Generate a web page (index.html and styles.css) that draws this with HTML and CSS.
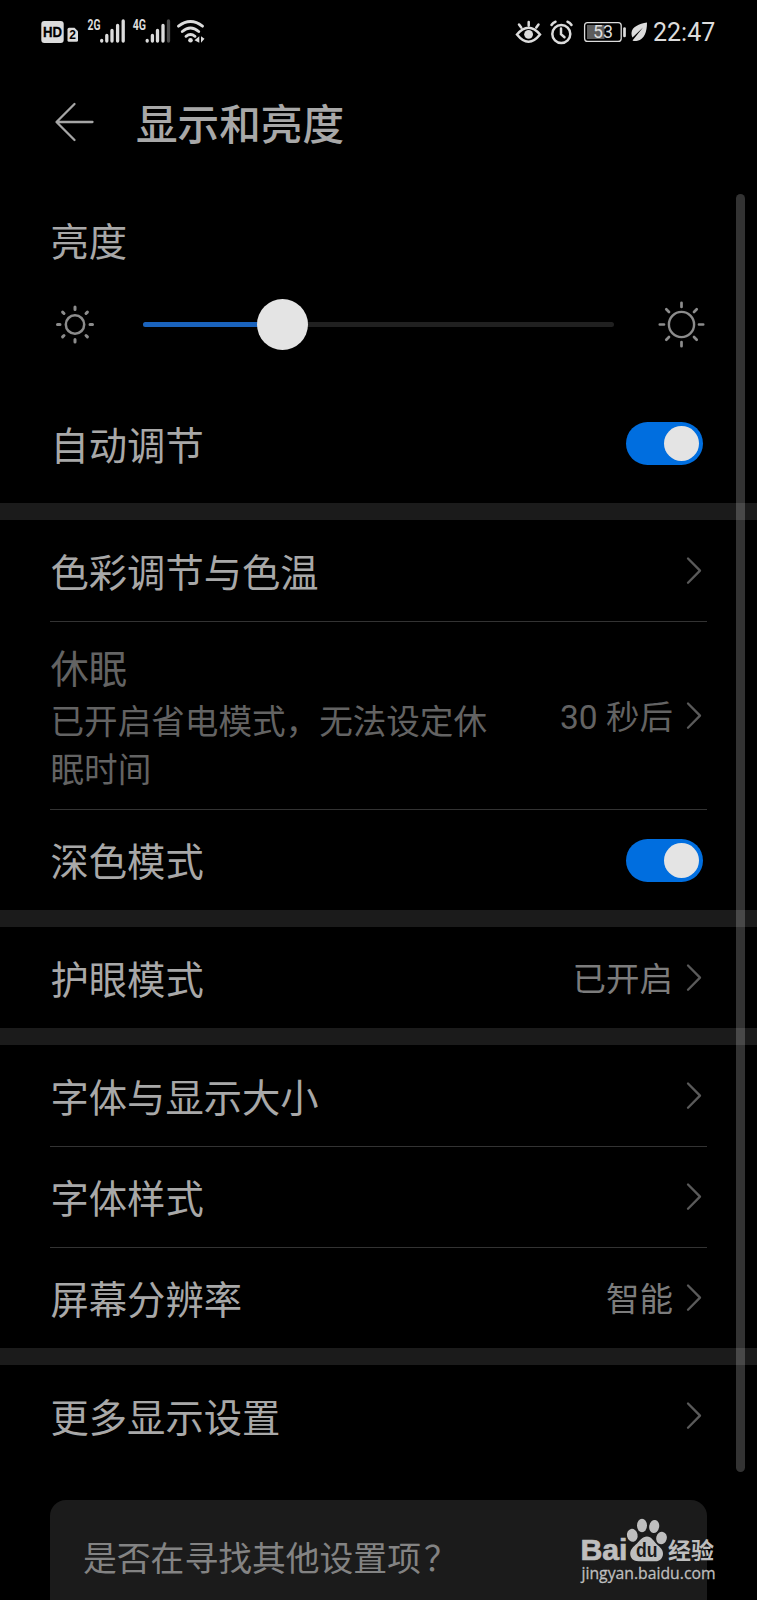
FILE: index.html
```html
<!DOCTYPE html>
<html lang="zh-CN">
<head>
<meta charset="utf-8">
<title>显示和亮度</title>
<link rel="stylesheet" href="styles.css">
</head>
<body>
<svg class="defs" width="0" height="0">
  <symbol id="chevron" viewBox="0 0 18 30"><path d="M2 2.500 14 14.600 2 26.700" fill="none" stroke="currentColor" stroke-width="2.300" stroke-linecap="round" stroke-linejoin="round"/></symbol>
</svg>
<div class="screen">
  <header class="status">
    <svg class="status-left" viewBox="36 10 180 40" fill="#dcdcdc">
      <rect x="41.300" y="21" width="22.400" height="22" rx="3"/>
      <text class="hd" x="43" y="37.300" textLength="19" lengthAdjust="spacingAndGlyphs">HD</text>
      <path d="M67.500 29.300q0-1.500 1.500-1.500h5.500l3.500 3.500v9q0 1.500-1.500 1.500H69q-1.500 0-1.500-1.500z"/>
      <text class="sim" x="69.300" y="39.300">2</text>
      <text class="net" x="87.500" y="30" textLength="13" lengthAdjust="spacingAndGlyphs">2G</text>
      <g stroke="#dcdcdc" stroke-width="3.300" stroke-linecap="round">
        <path d="M101.700 40.500v.6M106.800 35.500v5.600M112 30.500v10.600M117.600 25.500v15.600M123.200 21v20.100"/>
        <path d="M147.200 40.500v.6M152.400 35.500v5.600M157.500 30.500v10.600M163 25.500v15.600"/>
        <path d="M168.500 21v20.100" stroke="#4a4a4a"/>
      </g>
      <text class="net" x="132.700" y="30" textLength="13.300" lengthAdjust="spacingAndGlyphs">4G</text>
      <g fill="none" stroke="#dcdcdc" stroke-width="2.900" stroke-linecap="round">
        <path d="M178.500 26.200q12-9.500 24 0M182.300 31.500q8.200-6.800 16.400 0M186 36.300q4.500-3.500 9 0"/>
      </g>
      <circle cx="190.500" cy="40.300" r="2.300"/>
      <path d="M199.300 36.300v6.500l-4.800-2.500zM201 36.300v6.500l3.500-4z"/>
    </svg>
    <svg class="status-right" viewBox="510 10 140 40" fill="none" stroke="#dcdcdc" stroke-width="2.500" stroke-linecap="round">
      <path d="M517 34.500q11.500-13.500 23 0q-11.500 14.500-23 0zM528.700 22v3.500M519 24.500l2.200 3M538.500 24.500l-2.200 3"/>
      <circle cx="528.600" cy="34.300" r="4.400" fill="#dcdcdc" stroke="none"/>
      <circle cx="561.300" cy="34" r="9"/>
      <path d="M561 28.500v5.800l3.500 3M551.500 25q1.500-2.500 4-3.300M571.500 25q-1.500-2.500-4-3.300"/>
      <rect x="584.600" y="22.600" width="36.600" height="18.800" rx="3" stroke-width="1.300"/>
      <rect x="587" y="25" width="17.500" height="14" fill="#5c5c5c" stroke="none"/>
      <path d="M624.500 28.500v7.500" stroke-width="2.700"/>
      <text class="batt" x="593" y="38.300" stroke="none" textLength="20" lengthAdjust="spacingAndGlyphs">53</text>
      <path d="M647 22.500c-8 1.500-15 4-15.500 10.500c0 2 .3 3.200 1 4.500l10.500-10-10.500 13q2 1 5 .3c7-1.800 9.500-9 9.500-18.300z" fill="#dcdcdc" stroke="none"/>
    </svg>
    <span class="time">22:47</span>
  </header>

  <div class="titlebar">
    <svg class="back" viewBox="0 0 42 42" fill="none" stroke="#a6a6a6" stroke-width="2.300" stroke-linecap="round" stroke-linejoin="round"><path d="M38.500 21H3M20.500 3 2.500 21l18 18"/></svg>
    <h1>显示和亮度</h1>
  </div>

  <section class="brightness">
    <div class="label">亮度</div>
    <div class="slider-row">
      <svg class="sun" viewBox="-25 -24.500 50 50" fill="none" stroke="#8c8c8c" stroke-width="3" stroke-linecap="round">
        <circle r="9.200" stroke-width="2.500"/>
        <path d="M0-15v-2.500M0 15v2.500M-15 0h-2.500M15 0h2.500M-11-11l-1.400-1.400M11-11l1.400-1.400M-11 11l-1.400 1.400M11 11l1.400 1.400"/>
      </svg>
      <div class="track"><div class="fill"></div><div class="thumb"></div></div>
      <svg class="sun" viewBox="-24.500 -24.500 50 50" fill="none" stroke="#8c8c8c" stroke-width="2.700" stroke-linecap="round">
        <circle r="12.600" stroke-width="2.400"/>
        <path d="M0-17.500v-4.200M0 17.500v4.200M-17.500 0h-4.200M17.500 0h4.200M-12.500-12.500l-2.700-2.700M12.500-12.500l2.700-2.700M-12.500 12.500l-2.700 2.700M12.500 12.500l2.700 2.700"/>
      </svg>
    </div>
  </section>
  <div class="row auto"><span class="label">自动调节</span><span class="toggle"></span></div>
  <div class="band"></div>

  <div class="row"><span class="label">色彩调节与色温</span><svg class="chev"><use href="#chevron"/></svg></div>
  <div class="rule"></div>
  <div class="row sleep">
    <div class="stack"><div class="label">休眠</div><div class="note">已开启省电模式，无法设定休眠时间</div></div>
    <span class="value">30 秒后</span><svg class="chev"><use href="#chevron"/></svg>
  </div>
  <div class="rule"></div>
  <div class="row short"><span class="label">深色模式</span><span class="toggle"></span></div>
  <div class="band"></div>

  <div class="row"><span class="label">护眼模式</span><span class="value">已开启</span><svg class="chev"><use href="#chevron"/></svg></div>
  <div class="band"></div>

  <div class="row"><span class="label">字体与显示大小</span><svg class="chev"><use href="#chevron"/></svg></div>
  <div class="rule"></div>
  <div class="row short"><span class="label">字体样式</span><svg class="chev"><use href="#chevron"/></svg></div>
  <div class="rule"></div>
  <div class="row short"><span class="label">屏幕分辨率</span><span class="value">智能</span><svg class="chev"><use href="#chevron"/></svg></div>
  <div class="band"></div>

  <div class="row"><span class="label">更多显示设置</span><svg class="chev"><use href="#chevron"/></svg></div>
  <div class="card">是否在寻找其他设置项<span class="mark">？</span></div>

  <div class="scrollbar"></div>
  <svg class="watermark" viewBox="575 1510 150 80" fill="#bebebe">
    <text class="wm-bai" x="580.500" y="1560.300" textLength="47" lengthAdjust="spacingAndGlyphs">Bai</text>
    <ellipse cx="632.300" cy="1535.300" rx="5.300" ry="6.500" transform="rotate(-12 632.300 1535.300)"/>
    <ellipse cx="642" cy="1525.500" rx="5" ry="6.700"/>
    <ellipse cx="654.200" cy="1526.500" rx="5" ry="6.500" transform="rotate(10 654.200 1526.500)"/>
    <ellipse cx="661.500" cy="1538" rx="5.300" ry="6.300" transform="rotate(14 661.500 1538)"/>
    <path d="M647 1536.500c4.500 0 6.500 4.500 9.500 7.500c3.500 3.300 6.700 5.500 6.500 10c-.2 4-3 7.300-7.500 7.300h-17c-5 0-8.300-3-8.300-7.500c0-4.300 3.300-7 6.500-10c3.200-3.200 5.500-7.300 10.300-7.300z"/>
    <text class="wm-du" x="636" y="1557.300" textLength="21.500" lengthAdjust="spacingAndGlyphs">du</text>
    <text class="wm-cn" x="668" y="1558.800" textLength="46" lengthAdjust="spacingAndGlyphs">经验</text>
    <text class="wm-url" x="581.500" y="1579" textLength="134" lengthAdjust="spacingAndGlyphs">jingyan.baidu.com</text>
  </svg>
</div>
</body>
</html>
```
FILE: styles.css
```css
* { box-sizing: border-box; }
body {
  margin: 0;
  background: #000;
  color: #a8a8a8;
  font-family: Roboto, "Noto Sans CJK SC", sans-serif;
}
.defs { display: block; }
.screen {
  position: relative;
  width: 757px;
  height: 1600px;
  overflow: hidden;
  background: #000;
}
.status {
  display: flex;
  height: 60px;
  padding: 10px 0 0 36px;
}
.status-left { width: 180px; height: 40px; margin-right: 294px; }
.status-right { width: 140px; height: 40px; }
.time {
  margin-left: 3px;
  font-size: 25px;
  line-height: 46px;
  color: #dcdcdc;
}
.hd { font: 700 15px "Liberation Sans", sans-serif; fill: #000; stroke: #000; stroke-width: .3px; }
.sim { font: 700 12px "Liberation Sans", sans-serif; fill: #000; }
.net { font: 700 14.500px Roboto, sans-serif; }
.batt { font: 400 17.500px Roboto, sans-serif; fill: #dcdcdc; }

.titlebar {
  display: flex;
  align-items: center;
  height: 124px;
  padding: 0 0 0 54px;
}
.back { width: 42px; height: 42px; }
.titlebar h1 {
  margin: 8px 0 0 40px;
  font-size: 41.600px;
  font-weight: 500;
  line-height: 60px;
}
.brightness { height: 210px; padding-top: 31px; }
.brightness .label { padding-left: 50.500px; line-height: 56px; }
.label { font-size: 38.300px; font-weight: 400; white-space: nowrap; }
.slider-row {
  display: flex;
  align-items: center;
  height: 51px;
  margin-top: 28px;
  padding: 0 50px;
}
.sun { width: 50px; height: 50px; }
.track {
  position: relative;
  width: 471px;
  height: 5px;
  margin: 0 43px;
  border-radius: 3px;
  background: #202020;
}
.fill { width: 140px; height: 5px; border-radius: 3px; background: #1a63bd; }
.thumb {
  position: absolute;
  left: 114px;
  top: -23px;
  width: 51px;
  height: 51px;
  border-radius: 50%;
  background: #e4e4e4;
}
.row {
  display: flex;
  align-items: center;
  height: 101px;
  padding: 0 53px 0 50.500px;
}
.row .label { flex: 1; padding-top: 6px; line-height: 50px; }
.row.auto { height: 109px; padding-bottom: 10px; }
.row.short { height: 100px; }
.row.sleep { height: 187px; color: #636363; }
.stack { flex: 1; padding-top: 9px; }
.sleep .stack .label { padding-top: 0; line-height: 48px; }
.note { width: 460px; padding-top: 5px; font-size: 33.600px; line-height: 48px; }
.value { margin: -3px 13px 0 0; font-size: 33.500px; color: #7c7c7c; }
.sleep .value { color: #636363; }
.chev { width: 18px; height: 30px; color: #5a5a5a; }
.toggle {
  display: flex;
  justify-content: flex-end;
  width: 77px;
  height: 43px;
  margin-right: 1px;
  padding: 4px;
  border-radius: 22px;
  background: #006edf;
}
.toggle::after { content: ""; width: 35px; height: 35px; border-radius: 50%; background: #e4e4e4; }
.rule { height: 1px; margin: 0 50px; background: #333; }
.band { height: 17px; background: #1b1b1b; }
.card {
  height: 150px;
  margin: 34px 50px 0;
  padding: 32px 33px;
  border-radius: 16px;
  background: #1b1b1b;
  color: #838383;
  font-size: 33.800px;
  line-height: 56px;
}
.mark { margin-left: 3px; }
.scrollbar {
  position: absolute;
  left: 736px;
  top: 194px;
  width: 9px;
  height: 1278px;
  border-radius: 5px;
  background: rgba(255, 255, 255, .2);
}
.watermark { position: absolute; left: 575px; top: 1510px; width: 150px; height: 80px; }
.wm-bai { font: 700 29px "Liberation Sans", sans-serif; stroke: #bebebe; stroke-width: .7px; }
.wm-du { font: 700 20px "Liberation Sans", sans-serif; fill: #1b1b1b; }
.wm-cn { font: 700 23px "Noto Sans CJK SC", sans-serif; }
.wm-url { font: 400 16.500px "Open Sans", sans-serif; stroke: #bebebe; stroke-width: .3px; }
```
